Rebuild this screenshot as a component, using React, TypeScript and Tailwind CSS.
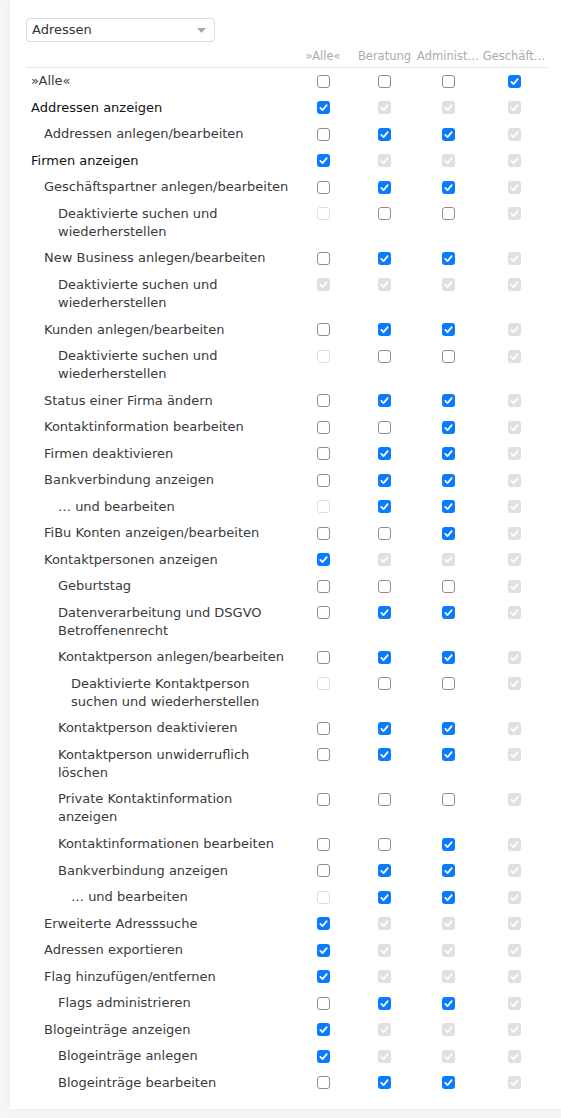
import React from "react";

type Row = [number, string[], string, boolean?];

const ROWS: Row[] = [
  [0, ["»Alle«"], "uuuc"],
  [0, ["Addressen anzeigen"], "cddd", true],
  [1, ["Addressen anlegen/bearbeiten"], "uccd"],
  [0, ["Firmen anzeigen"], "cddd", true],
  [1, ["Geschäftspartner anlegen/bearbeiten"], "uccd"],
  [2, ["Deaktivierte suchen und", "wiederherstellen"], "xuud"],
  [1, ["New Business anlegen/bearbeiten"], "uccd"],
  [2, ["Deaktivierte suchen und", "wiederherstellen"], "dddd"],
  [1, ["Kunden anlegen/bearbeiten"], "uccd"],
  [2, ["Deaktivierte suchen und", "wiederherstellen"], "xuud"],
  [1, ["Status einer Firma ändern"], "uccd"],
  [1, ["Kontaktinformation bearbeiten"], "uucd"],
  [1, ["Firmen deaktivieren"], "uccd"],
  [1, ["Bankverbindung anzeigen"], "uccd"],
  [2, ["… und bearbeiten"], "xccd"],
  [1, ["FiBu Konten anzeigen/bearbeiten"], "uucd"],
  [1, ["Kontaktpersonen anzeigen"], "cddd"],
  [2, ["Geburtstag"], "uuud"],
  [2, ["Datenverarbeitung und DSGVO", "Betroffenenrecht"], "uccd"],
  [2, ["Kontaktperson anlegen/bearbeiten"], "uccd"],
  [3, ["Deaktivierte Kontaktperson", "suchen und wiederherstellen"], "xuud"],
  [2, ["Kontaktperson deaktivieren"], "uccd"],
  [2, ["Kontaktperson unwiderruflich", "löschen"], "uccd"],
  [2, ["Private Kontaktinformation", "anzeigen"], "uuud"],
  [2, ["Kontaktinformationen bearbeiten"], "uucd"],
  [2, ["Bankverbindung anzeigen"], "uccd"],
  [3, ["… und bearbeiten"], "xccd"],
  [1, ["Erweiterte Adresssuche"], "cddd"],
  [1, ["Adressen exportieren"], "cddd"],
  [1, ["Flag hinzufügen/entfernen"], "cddd"],
  [2, ["Flags administrieren"], "uccd"],
  [1, ["Blogeinträge anzeigen"], "cddd"],
  [2, ["Blogeinträge anlegen"], "cddd"],
  [2, ["Blogeinträge bearbeiten"], "uccd"],
];

const INDENT = ["pl-[5px]", "pl-[18px]", "pl-[32px]", "pl-[45px]"];

function Check() {
  return (
    <svg width="13" height="13" viewBox="0 0 13 13" className="block">
      <path
        d="M3.3 6.9 L5.5 9.1 L9.7 4.1"
        fill="none"
        stroke="white"
        strokeWidth="1.7"
        strokeLinecap="round"
        strokeLinejoin="round"
      />
    </svg>
  );
}

function Box({ s }: { s: string }) {
  if (s === "u")
    return <span className="block w-[13px] h-[13px] rounded-[3px] border border-[#8e8e93] bg-white" />;
  if (s === "x")
    return <span className="block w-[13px] h-[13px] rounded-[3px] border border-[#dedede] bg-white" />;
  if (s === "c")
    return (
      <span className="block w-[13px] h-[13px] rounded-[3px] bg-[#0a7aff]">
        <Check />
      </span>
    );
  return (
    <span className="block w-[13px] h-[13px] rounded-[3px] bg-[#e0e0e3]">
      <Check />
    </span>
  );
}

const COLS = ["»Alle«", "Beratung", "Administ…", "Geschäft…"];

export default function App() {
  return (
    <div className="min-h-[1118px] bg-[#f6f6f6] pl-[10px] font-['DejaVu_Sans',sans-serif]">
      <div className="bg-white shadow-[0_0_6px_rgba(0,0,0,0.06)] pt-[18px] pl-[16px] pr-[14px] pb-[13px]">
        <div className="w-[189px] h-[24px] rounded-[4px] border border-[#dcdcdc] flex items-center justify-between pl-[5px] pr-[8px]">
          <span className="text-[13px] text-[#333]">Adressen</span>
          <svg width="9" height="5" viewBox="0 0 9 5">
            <path d="M0 0 L9 0 L4.5 5 Z" fill="#a8a8a8" />
          </svg>
        </div>
        <div className="grid grid-cols-[1fr_62px_61px_66px_66px] h-[26px] items-end border-b border-[#e5e5e5] pb-[2px]">
          <div />
          {COLS.map((c) => (
            <div key={c} className="text-center text-[11.5px] leading-[18px] text-[#ababab] whitespace-nowrap">
              {c}
            </div>
          ))}
        </div>
        <div className="flex flex-col">
          {ROWS.map(([lvl, lines, st, strong], i) => (
            <div key={i} className="grid grid-cols-[1fr_62px_61px_66px_66px] py-[4.27px]">
              <div
                className={`${INDENT[lvl]} text-[13px] leading-[18px] whitespace-nowrap ${
                  strong ? "text-[#111]" : "text-[#3a3a3a]"
                }`}
              >
                {lines.map((l, j) => (
                  <div key={j}>{l}</div>
                ))}
              </div>
              {st.split("").map((s, j) => (
                <div key={j} className="flex justify-center pt-[2.5px]">
                  <Box s={s} />
                </div>
              ))}
            </div>
          ))}
        </div>
      </div>
    </div>
  );
}
